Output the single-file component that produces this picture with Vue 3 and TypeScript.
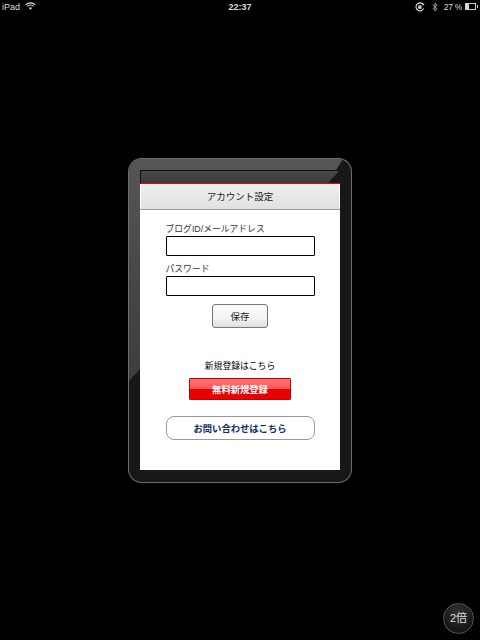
<script setup lang="ts">
const fields = [
  { label: 'ブログID/メールアドレス' },
  { label: 'パスワード' },
]
</script>

<template>
  <div class="page">
    <header class="status">
      <div class="status-left">
        <span>iPad</span>
        <svg class="wifi" width="11" height="8" viewBox="0 0 12 9">
          <path d="M0.6 3.2 A7.6 7.6 0 0 1 11.4 3.2" fill="none" stroke="#ddd" stroke-width="1.2" />
          <path d="M2.4 5 A5 5 0 0 1 9.6 5" fill="none" stroke="#ddd" stroke-width="1.2" />
          <path d="M4.2 6.8 L6 8.8 L7.8 6.8 A2.6 2.6 0 0 0 4.2 6.8 Z" fill="#ddd" />
        </svg>
      </div>
      <span class="clock">22:37</span>
      <div class="status-right">
        <svg width="10" height="10" viewBox="0 0 10 10">
          <path d="M8.6 6.6 A4 4 0 1 1 7.8 2" fill="none" stroke="#ddd" stroke-width="1.1" />
          <rect x="3.2" y="4.2" width="3.4" height="2.6" fill="#ddd" />
          <path d="M3.8 4.2 V3.4 H6 V4.2" fill="none" stroke="#ddd" stroke-width="0.7" />
          <path d="M7 0.8 L9.6 2.2 L7.6 3.8 Z" fill="#ddd" />
        </svg>
        <svg class="bt" width="6" height="10" viewBox="0 0 6 10">
          <path d="M0.6 2.6 L5 6.8 L2.9 9 V1 L5 3.2 L0.6 7.4" fill="none" stroke="#aaa" stroke-width="0.9" />
        </svg>
        <span class="pct">27 %</span>
        <div class="battery"><div class="level"></div></div>
      </div>
    </header>

    <main class="frame">
      <div class="gloss"></div>
      <div class="screen">
        <div class="title">アカウント設定</div>
        <div class="content">
          <form class="form" @submit.prevent>
            <label v-for="f in fields" :key="f.label" class="field">
              <span>{{ f.label }}</span>
              <input type="text" />
            </label>
            <button class="save" type="button">保存</button>
          </form>
          <p class="signup-label">新規登録はこちら</p>
          <button class="signup" type="button">無料新規登録</button>
          <button class="contact" type="button">お問い合わせはこちら</button>
        </div>
      </div>
    </main>

    <div class="zoom">2倍</div>
  </div>
</template>

<style scoped>
.page {
  position: relative;
  width: 480px;
  height: 640px;
  overflow: hidden;
  background: #000;
  font-family: "Liberation Sans", "Noto Sans CJK JP", sans-serif;
}
.status {
  height: 20px;
  box-sizing: border-box;
  padding: 0 2px 7px 2px;
  display: grid;
  grid-template-columns: 1fr auto 1fr;
  align-items: center;
  color: #ddd;
  font-size: 9px;
}
.status-left {
  display: flex;
  align-items: center;
  gap: 5px;
}
.wifi {
  margin-top: -1px;
}
.clock {
  font-weight: 700;
  font-size: 9px;
}
.status-right {
  display: flex;
  align-items: center;
  justify-content: flex-end;
}
.bt {
  margin-left: 7px;
}
.pct {
  font-size: 8.5px;
  letter-spacing: -0.3px;
  margin-left: 6px;
}
.battery {
  position: relative;
  width: 11px;
  height: 7px;
  box-sizing: border-box;
  border: 1px solid #ccc;
  margin: 0 2px 0 3px;
}
.battery::after {
  content: "";
  position: absolute;
  right: -3px;
  top: 1px;
  width: 1px;
  height: 3px;
  background: #ccc;
}
.level {
  width: 3px;
  height: 100%;
  background: #ddd;
}
.frame {
  position: relative;
  width: 224px;
  height: 325px;
  box-sizing: border-box;
  margin: 138px 0 0 128px;
  padding: 12px;
  background: #181818;
  border-radius: 14px;
  box-shadow: inset 0 0 0 1px #6e6e6e;
}
.gloss {
  position: absolute;
  inset: 1px;
  border-radius: 13px;
  background: linear-gradient(180deg, #565656, #464646 40%, #343434);
  clip-path: polygon(0 0, 214px 0, 199px 24px, 11px 24px, 11px 210px, 0 222px);
}
.screen {
  position: relative;
  height: 300px;
  padding-top: 13px;
  box-sizing: border-box;
  display: flex;
  flex-direction: column;
}
.screen::before {
  content: "";
  position: absolute;
  inset: 0 0 auto 0;
  height: 13px;
  border: 1px solid #111;
  border-width: 1px 0 0 1px;
  box-sizing: border-box;
  background: linear-gradient(180deg, #4a4a4a, #3a3a3a);
  clip-path: polygon(0 0, 100% 0, 188px 100%, 0 100%);
}
.title {
  height: 27px;
  box-sizing: border-box;
  border-top: 1px solid #e60012;
  border-bottom: 1px solid #999;
  background: linear-gradient(180deg, #f0f0f0, #e0e0e0);
  box-shadow: inset 1px 0 #fff, inset -1px 0 #fff;
  color: #222;
  font-size: 9.5px;
  line-height: 25px;
  text-align: center;
}
.content {
  flex: 1;
  background: #fff;
  display: flex;
  flex-direction: column;
  align-items: center;
}
.form {
  width: 149px;
  padding-top: 12px;
  display: flex;
  flex-direction: column;
  gap: 6px;
}
.field {
  display: flex;
  flex-direction: column;
  color: #333;
  font-size: 8.8px;
  line-height: 14px;
}
.field input {
  width: 149px;
  height: 20px;
  box-sizing: border-box;
  margin: 0;
  padding: 0;
  background: #fff;
  border: 1px solid #000;
  border-radius: 1px;
  outline: none;
}
.save {
  align-self: center;
  width: 56px;
  height: 24px;
  margin-top: 2px;
  padding: 0;
  border: 1px solid #777;
  border-radius: 3px;
  background: linear-gradient(180deg, #fcfcfc 0, #f4f4f4 60%, #dedede 100%);
  color: #222;
  font: inherit;
  font-size: 9.5px;
}
.signup-label {
  margin: 31px 0 0;
  color: #000;
  font-size: 8.8px;
  line-height: 14px;
}
.signup {
  width: 102px;
  height: 22px;
  margin-top: 5px;
  padding: 0;
  border: 1px solid #c40000;
  border-radius: 1px;
  background: linear-gradient(180deg, #f77 0, #f55 50%, #e00 52%, #e60000 100%);
  color: #fff;
  font: inherit;
  font-size: 9.3px;
  font-weight: 700;
}
.contact {
  width: 149px;
  height: 24px;
  margin-top: 16px;
  padding: 0;
  border: 1px solid #999;
  border-radius: 8px;
  background: #fff;
  color: #14286e;
  font: inherit;
  font-size: 9.3px;
  font-weight: 700;
}
.zoom {
  position: absolute;
  right: 6px;
  bottom: 6px;
  width: 29px;
  height: 29px;
  border: 1px solid #555;
  border-radius: 50%;
  background: radial-gradient(circle at 50% 30%, #333, #161616 70%);
  color: #ddd;
  font-size: 11px;
  line-height: 29px;
  text-align: center;
}
</style>
